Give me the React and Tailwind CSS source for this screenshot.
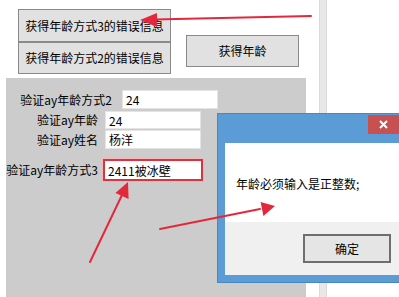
import React from "react";

const font = "font-['Noto_Sans_CJK_SC',sans-serif] text-[12px] leading-[16px] text-black";

function WinButton({ className = "", children }) {
  return (
    <div
      className={`flex items-center justify-center bg-[#e1e1e1] border border-[#8a8a8a] ${className}`}
    >
      {children}
    </div>
  );
}

function Field({ value, className = "" }) {
  return (
    <input
      readOnly
      value={value}
      className={`bg-white px-[3px] outline-none ${font} ${className}`}
    />
  );
}

function Arrows() {
  return (
    <svg
      className="absolute inset-0 pointer-events-none"
      width="399"
      height="297"
      viewBox="0 0 399 297"
    >
      <g stroke="#e4283c" strokeWidth="2" strokeLinecap="round" fill="#e4283c">
        <line x1="311" y1="16" x2="154" y2="19.6" />
        <line x1="90" y1="262" x2="122" y2="195" />
        <line x1="160" y1="229" x2="260" y2="209" />
      </g>
      <g fill="#e4283c">
        <polygon points="140,20 157,13 157,27" />
        <polygon points="128,182 128.6,199 115.4,193" />
        <polygon points="275,206 260.6,202 263.4,216" />
      </g>
    </svg>
  );
}

function MessageBox() {
  return (
    <div className="absolute left-[217px] top-[113px] w-[190px] h-[170px] bg-[#5b9bd6] border border-[#4a86c0] pl-[7px] pt-[29px] pb-[7px] flex flex-col">
      <div className="absolute left-[150px] top-[1px] w-[31px] h-[19px] bg-[#c75050] flex items-center justify-center">
        <svg width="9" height="9" viewBox="0 0 9 9">
          <path d="M1 1L8 8M8 1L1 8" stroke="white" strokeWidth="2" />
        </svg>
      </div>
      <div className="h-[79px] bg-white flex items-center pl-[11px] pt-[2px]">
        <span className={font}>年龄必须输入是正整数;</span>
      </div>
      <div className="flex-1 bg-[#f0f0f0] pl-[78px] pt-[12px]">
        <div className="w-[88px] h-[29px] bg-[#e5e5e5] border-2 border-[#6e6e6e] flex items-center justify-center">
          <span className={font}>确定</span>
        </div>
      </div>
    </div>
  );
}

export default function App() {
  return (
    <div className="relative w-[399px] h-[297px] overflow-hidden bg-white flex">
      <div className="w-[306px] flex flex-col">
        <div className="h-[78px] flex pl-[18px] pt-[9px]">
          <div className="flex flex-col w-[153px]">
            <WinButton className="h-[33px]">
              <span className={font}>获得年龄方式3的错误信息</span>
            </WinButton>
            <WinButton className="h-[32px]">
              <span className={font}>获得年龄方式2的错误信息</span>
            </WinButton>
          </div>
          <WinButton className="ml-[15px] mt-[26px] w-[113px] h-[32px]">
            <span className={font}>获得年龄</span>
          </WinButton>
        </div>
        <div className="flex-1 ml-[6px] bg-[#cccccc] pt-[12px] flex flex-col">
          <div className="flex items-center h-[19px]">
            <span className={`w-[106px] text-right ${font}`}>验证ay年龄方式2</span>
            <Field value="24" className="ml-[10px] w-[96px] h-[19px] border border-[#e4e4e4]" />
          </div>
          <div className="flex items-center h-[18px] mt-[2px]">
            <span className={`w-[92px] text-right ${font}`}>验证ay年龄</span>
            <Field value="24" className="ml-[7px] w-[96px] h-[18px] border border-[#e4e4e4]" />
          </div>
          <div className="flex items-center h-[19px] mt-[1px]">
            <span className={`w-[92px] text-right ${font}`}>验证ay姓名</span>
            <Field value="杨洋" className="ml-[7px] w-[96px] h-[19px] border border-[#e4e4e4]" />
          </div>
          <div className="flex items-center h-[22px] mt-[10px]">
            <span className={`w-[92px] text-right ${font}`}>验证ay年龄方式3</span>
            <Field
              value="2411被冰壁"
              className="ml-[5px] w-[100px] h-[22px] border-2 border-[#d9343f] shadow-[0_0_0_1px_#f2b8b8]"
            />
          </div>
        </div>
      </div>
      <div className="w-[13px]" />
      <div className="w-[8px] bg-[#e8e8e8] border-x border-[#dadada]" />
      <MessageBox />
      <Arrows />
    </div>
  );
}
